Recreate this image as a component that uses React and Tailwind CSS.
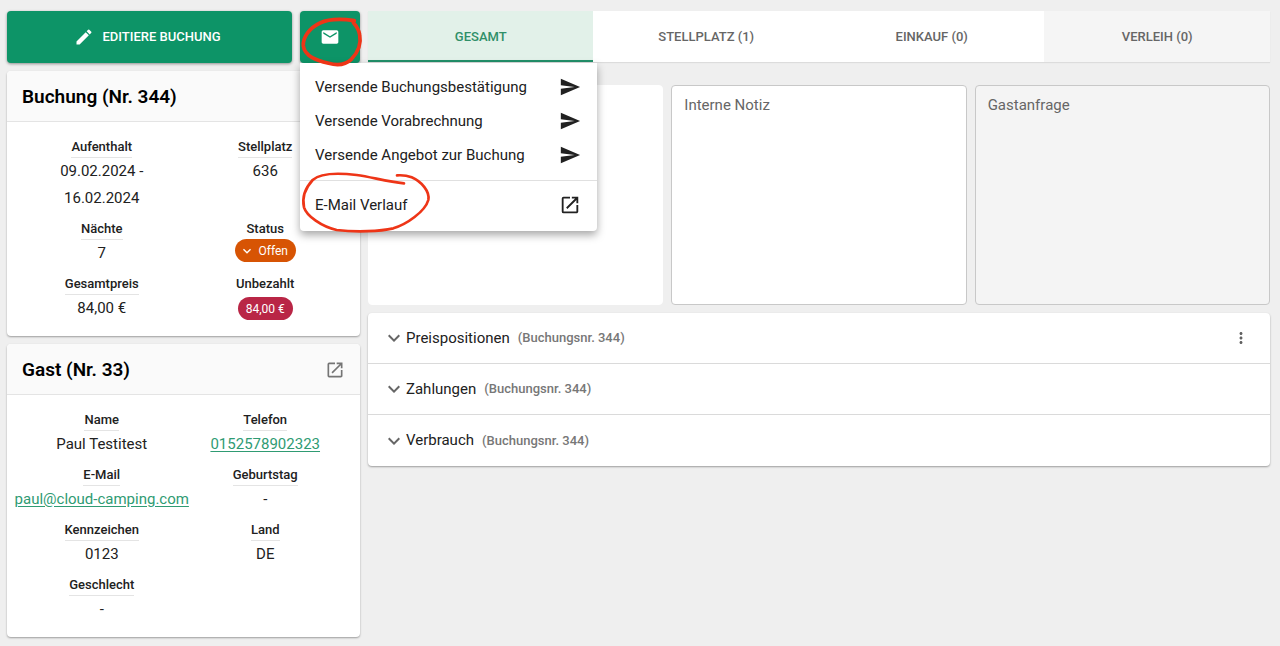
import { useState } from "react";
import {
  MdEdit,
  MdExpandMore,
  MdMail,
  MdMoreVert,
  MdOpenInNew,
  MdSend,
} from "react-icons/md";

const mailActions = [
  "Versende Buchungsbestätigung",
  "Versende Vorabrechnung",
  "Versende Angebot zur Buchung",
];

const tabs = ["Gesamt", "Stellplatz (1)", "Einkauf (0)", "Verleih (0)"];

const sections = [
  { title: "Preispositionen", hasMenu: true },
  { title: "Zahlungen" },
  { title: "Verbrauch" },
];

function Card({ title, action, children }) {
  return (
    <section className="rounded-sm bg-white shadow-[0_1px_2px_rgba(0,0,0,0.35)]">
      <div className="flex h-[51px] items-center justify-between rounded-t-sm border-b border-[#e4e4e4] bg-[#fafafa] px-[15px] pt-[2px]">
        <h2 className="text-[19px] font-semibold text-black">{title}</h2>
        {action}
      </div>
      <dl className="grid grid-cols-2 gap-y-[7px] px-[13px] pt-[15px] pb-[14px] text-center">
        {children}
      </dl>
    </section>
  );
}

function Field({ label, plain, children }) {
  return (
    <div className="flex flex-col items-center">
      <dt
        className={
          plain
            ? "h-5 text-[13px] leading-5 font-medium"
            : "h-[21px] border-b border-[#e4e4e4] text-[13px] leading-5 font-medium"
        }
      >
        {label}
      </dt>
      <dd className="text-[15px] leading-[27px] whitespace-nowrap">{children}</dd>
    </div>
  );
}

function MailMenu() {
  return (
    <ul
      role="menu"
      className="absolute top-full left-0 z-10 w-[297px] rounded-b-sm bg-white pt-[7px] pb-[9px] shadow-[0_4px_8px_rgba(0,0,0,0.35)]"
    >
      {mailActions.map((action) => (
        <li key={action} role="none">
          <button
            type="button"
            role="menuitem"
            className="flex h-[34px] w-full items-center justify-between pr-4 pl-[15px] text-[15px]"
          >
            {action}
            <MdSend className="size-[22px]" />
          </button>
        </li>
      ))}
      <li role="none" className="mt-2 border-t border-[#e0e0e0] pt-[7px]">
        <button
          type="button"
          role="menuitem"
          className="flex h-[34px] w-full items-center justify-between pr-4 pl-[15px] text-[15px]"
        >
          E-Mail Verlauf
          <MdOpenInNew className="size-[22px]" />
        </button>
      </li>
    </ul>
  );
}

// hand drawn markers around the mail button and the history entry
function Markers() {
  return (
    <svg
      viewBox="30 33 420 675"
      className="pointer-events-none absolute top-0 left-0 z-20 h-[225px] w-[140px] max-w-none overflow-visible"
      fill="none"
      stroke="#ee3517"
      strokeLinecap="round"
      strokeLinejoin="round"
      aria-hidden="true"
    >
      <path
        strokeWidth="11"
        d="M193 62C160 57 118 56 90 69C58 84 38 112 40 138C44 170 82 181 116 190C146 198 168 193 184 178C204 157 214 130 209 104C206 86 197 76 190 68"
      />
      <path
        strokeWidth="8"
        d="M342 550C290 545 245 531 200 525C150 519 92 518 68 540C45 565 36 595 42 622C50 648 95 680 140 690C200 697 270 694 310 685C350 673 405 635 415 600C420 575 395 545 365 532C350 526 335 525 321 526"
      />
    </svg>
  );
}

export default function App() {
  const [activeTab, setActiveTab] = useState(0);
  const [menuOpen, setMenuOpen] = useState(true);

  return (
    <main className="grid min-h-screen grid-cols-[9fr_23fr] gap-2 bg-[#efefef] pt-[11px] pr-[10px] pb-2 pl-[7px] font-['Roboto',sans-serif] text-[#212121]">
      <div className="flex min-w-0 flex-col gap-2">
        <div className="flex h-[52px] gap-2">
          <button
            type="button"
            className="flex flex-1 items-center justify-center gap-2 rounded-sm bg-[#0d9467] text-[13px] font-medium text-white uppercase shadow-[0_1px_3px_rgba(0,0,0,0.4)]"
          >
            <MdEdit className="-ml-1 size-5" />
            Editiere Buchung
          </button>
          <div className="relative w-[60px]">
            <button
              type="button"
              aria-label="E-Mail"
              aria-expanded={menuOpen}
              onClick={() => setMenuOpen(!menuOpen)}
              className="flex size-full items-center justify-center rounded-sm bg-[#0d9467] text-white shadow-[0_1px_3px_rgba(0,0,0,0.4)]"
            >
              <MdMail className="size-5" />
            </button>
            {menuOpen && <MailMenu />}
            {menuOpen && <Markers />}
          </div>
        </div>

        <Card title="Buchung (Nr. 344)">
          <Field label="Aufenthalt">
            09.02.2024 -<br />
            16.02.2024
          </Field>
          <Field label="Stellplatz">636</Field>
          <Field label="Nächte">7</Field>
          <Field label="Status" plain>
            <button
              type="button"
              className="flex h-[23px] items-center gap-1 rounded-full bg-[#d75404] pr-2 pl-1 text-xs text-white"
            >
              <MdExpandMore className="size-4" />
              Offen
            </button>
          </Field>
          <Field label="Gesamtpreis">84,00 €</Field>
          <Field label="Unbezahlt" plain>
            <span className="mt-[3px] flex h-[23px] items-center rounded-full bg-[#b92646] px-2 text-xs text-white">
              84,00 €
            </span>
          </Field>
        </Card>

        <Card
          title="Gast (Nr. 33)"
          action={
            <button type="button" aria-label="Gast öffnen" className="text-[#757575]">
              <MdOpenInNew className="size-5" />
            </button>
          }
        >
          <Field label="Name">Paul Testitest</Field>
          <Field label="Telefon">
            <a href="tel:0152578902323" className="text-[#2f9b73] underline underline-offset-2">
              0152578902323
            </a>
          </Field>
          <Field label="E-Mail">
            <a
              href="mailto:paul@cloud-camping.com"
              className="text-[#2f9b73] underline underline-offset-2"
            >
              paul@cloud-camping.com
            </a>
          </Field>
          <Field label="Geburtstag">-</Field>
          <Field label="Kennzeichen">0123</Field>
          <Field label="Land">DE</Field>
          <Field label="Geschlecht">-</Field>
        </Card>
      </div>

      <div className="flex min-w-0 flex-col">
        <div role="tablist" className="grid h-[51px] grid-cols-4 shadow-[0_1px_1px_rgba(0,0,0,0.08)]">
          {tabs.map((tab, index) => (
            <button
              key={tab}
              type="button"
              role="tab"
              aria-selected={index === activeTab}
              onClick={() => setActiveTab(index)}
              className={
                index === activeTab
                  ? "border-b-2 border-[#22906a] bg-[#e2f1e9] pt-[2px] text-[13px] font-medium text-[#2f8f68] uppercase"
                  : index === 3
                    ? "bg-[#f5f5f5] text-[13px] font-medium text-[#666] uppercase"
                    : "bg-white text-[13px] font-medium text-[#666] uppercase"
              }
            >
              {tab}
            </button>
          ))}
        </div>

        <div className="mt-[23px] grid h-[220px] grid-cols-3 gap-2">
          <textarea
            aria-label="Notiz"
            className="resize-none rounded-sm border border-white bg-white px-3 py-2 text-[15px]"
          />
          <textarea
            aria-label="Interne Notiz"
            placeholder="Interne Notiz"
            className="resize-none rounded-sm border border-[#c8c8c8] bg-white px-3 py-2 text-[15px] placeholder:text-[#666]"
          />
          <textarea
            aria-label="Gastanfrage"
            placeholder="Gastanfrage"
            readOnly
            className="resize-none rounded-sm border border-[#c8c8c8] bg-[#f4f4f4] px-3 py-2 text-[15px] placeholder:text-[#666]"
          />
        </div>

        <div className="mt-2 divide-y divide-[#dadada] rounded-sm bg-white shadow-[0_1px_2px_rgba(0,0,0,0.35)]">
          {sections.map((section) => (
            <div key={section.title} className="flex h-[51px] items-center pr-5 pl-[14px]">
              <button type="button" className="flex flex-1 items-center">
                <MdExpandMore className="size-6 text-[#666]" />
                <span className="text-[15px]">{section.title}</span>
                <span className="ml-2 text-[13px] font-medium text-[#777]">
                  (Buchungsnr. 344)
                </span>
              </button>
              {section.hasMenu && (
                <button type="button" aria-label="Mehr" className="text-[#616161]">
                  <MdMoreVert className="size-[18px]" />
                </button>
              )}
            </div>
          ))}
        </div>
      </div>
    </main>
  );
}
